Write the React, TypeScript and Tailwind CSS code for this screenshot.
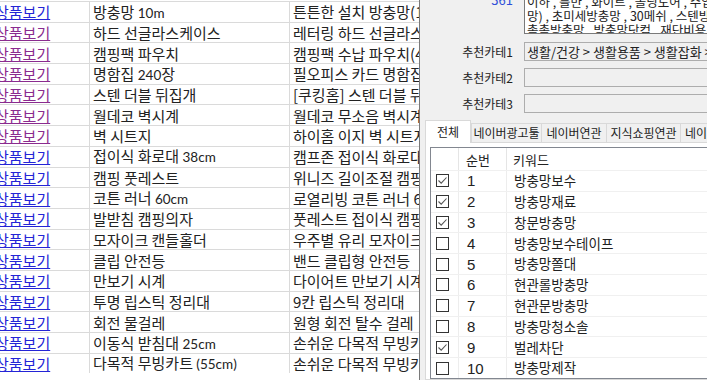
import React from 'react';

// product rows: [short name, full title]
const ROWS: [string, string][] = [
  ['방충망 10m', '튼튼한 설치 방충망(10m)'],
  ['하드 선글라스케이스', '레터링 하드 선글라스케이스'],
  ['캠핑팩 파우치', '캠핑팩 수납 파우치(4종)'],
  ['명함집 240장', '필오피스 카드 명함집 240장'],
  ['스텐 더블 뒤집개', '[쿠킹홈] 스텐 더블 뒤집개'],
  ['월데코 벽시계', '월데코 무소음 벽시계'],
  ['벽 시트지', '하이홈 이지 벽 시트지'],
  ['접이식 화로대 38cm', '캠프존 접이식 화로대'],
  ['캠핑 풋레스트', '위니즈 길이조절 캠핑 풋레스트'],
  ['코튼 러너 60cm', '로열리빙 코튼 러너 60cm'],
  ['발받침 캠핑의자', '풋레스트 접이식 캠핑의자'],
  ['모자이크 캔들홀더', '우주별 유리 모자이크 캔들홀더'],
  ['클립 안전등', '밴드 클립형 안전등'],
  ['만보기 시계', '다이어트 만보기 시계'],
  ['투명 립스틱 정리대', '9칸 립스틱 정리대'],
  ['회전 물걸레', '원형 회전 탈수 걸레'],
  ['이동식 받침대 25cm', '손쉬운 다목적 무빙카트'],
  ['다목적 무빙카트 (55cm)', '손쉬운 다목적 무빙카트'],
];

const KEYWORDS: [string, boolean][] = [
  ['방충망보수', true],
  ['방충망재료', true],
  ['창문방충망', true],
  ['방충망보수테이프', false],
  ['방충망쫄대', false],
  ['현관롤방충망', false],
  ['현관문방충망', false],
  ['방충망청소솔', false],
  ['벌레차단', true],
  ['방충망제작', false],
];

const KR = { fontFamily: '"Noto Sans CJK KR", "Noto Sans", sans-serif' };

// latin bits in the short name column render in a smaller face, like the sheet
function MixedText({ text }: { text: string }) {
  const parts = text.split(/([0-9A-Za-z()]+)/);
  return (
    <span className="whitespace-pre">
      {parts.map((p, i) =>
        /^[0-9A-Za-z()]+$/.test(p) ? (
          <span key={i} className="text-[13.5px] font-['Lato',sans-serif]">{p}</span>
        ) : (
          <span key={i}>{p}</span>
        )
      )}
    </span>
  );
}

function CheckBox({ checked }: { checked: boolean }) {
  return (
    <svg width="13" height="13" viewBox="0 0 13 13" className="shrink-0">
      <rect x="0.5" y="0.5" width="12" height="12" fill="#fff" stroke="#333" />
      {checked && <path d="M2.5 6.5 L5.2 9.2 L10.5 3.5" fill="none" stroke="#555" strokeWidth="1.1" />}
    </svg>
  );
}

function CategoryRow({ label, value }: { label: string; value?: string }) {
  return (
    <div className="mt-[7px] flex items-center h-[19px] shrink-0">
      <div className="w-[93px] shrink-0 text-right text-[12px] text-[#222] leading-none whitespace-nowrap">{label}</div>
      <div className="ml-[11px] w-[260px] shrink-0 h-full border border-[#adadad] bg-[#f0f0f0] px-[2px] text-[13px] leading-[17px] text-[#222] whitespace-nowrap overflow-hidden">
        {value}
      </div>
    </div>
  );
}

export default function App() {
  return (
    <div className="flex w-[707px] h-[380px] overflow-hidden bg-white" style={KR}>
      {/* --- Left sheet --- */}
      <div className="w-[419px] h-[380px] overflow-hidden bg-white pt-[1px] shrink-0">
        {ROWS.map(([name, title], i) => (
          <div key={i} className="flex h-[20.7px] border-t border-[#dadada] text-[15px] text-[#222]">
            <div className="w-[90px] h-full border-r border-[#dadada] flex items-center overflow-hidden shrink-0">
              <span
                className={`-ml-[5px] underline leading-none whitespace-nowrap ${
                  i >= 1 && i <= 6 ? 'text-[#8a2b8f]' : 'text-[#2424d6]'
                }`}
              >
                상품보기
              </span>
            </div>
            <div className="w-[200px] h-full border-r border-[#dadada] flex items-center pl-[3px] overflow-hidden whitespace-nowrap shrink-0 leading-none">
              <MixedText text={name} />
            </div>
            <div className="flex-1 h-full flex items-center pl-[3px] overflow-hidden whitespace-nowrap leading-none">
              {title}
            </div>
          </div>
        ))}
      </div>

      {/* --- Right panel --- */}
      <div className="w-[288px] h-[380px] border-l border-[#7a7a7a] bg-[#f0f0f0] overflow-hidden flex flex-col shrink-0">
        <div className="flex h-[35px] shrink-0 overflow-hidden items-start">
          <div className="w-[93px] shrink-0 text-right text-[13px] text-[#2f4fd8] leading-[13px] -mt-[7px]">361</div>
          <div className="ml-[11px] -mt-[8px] h-[42px] w-[260px] shrink-0 border border-[#7a7a7a] bg-white px-[2px] pt-[2px] text-[12.5px] leading-[14px] text-[#222] whitespace-nowrap overflow-hidden">
            <div>이하 , 틀만 , 화이트 , 폴딩도어 , 수입방충망</div>
            <div>망) , 초미세방충망 , 30메쉬 , 스텐방충망</div>
            <div>촘촘방충망 , 방충망닷컴 , 재단비용</div>
          </div>
        </div>

        <CategoryRow label="추천카테1" value="생활/건강 > 생활용품 > 생활잡화 > 모기장/방충망" />
        <CategoryRow label="추천카테2" />
        <CategoryRow label="추천카테3" />

        {/* tabs */}
        <div className="mt-[7px] ml-[5px] flex items-end h-[22px] shrink-0 text-[12px] text-[#222] whitespace-nowrap">
          <div className="w-[46px] h-[23px] bg-white border border-b-0 border-[#d9d9d9] flex items-center justify-center shrink-0 relative z-10 -mb-px">
            전체
          </div>
          <div className="w-[71px] h-[19px] bg-[#f0f0f0] border border-b-0 border-[#d9d9d9] flex items-center justify-center shrink-0">
            네이버광고툴
          </div>
          <div className="w-[65px] h-[19px] bg-[#f0f0f0] border border-b-0 border-l-0 border-[#d9d9d9] flex items-center justify-center shrink-0">
            네이버연관
          </div>
          <div className="w-[74px] h-[19px] bg-[#f0f0f0] border border-b-0 border-l-0 border-[#d9d9d9] flex items-center justify-center shrink-0">
            지식쇼핑연관
          </div>
          <div className="w-[60px] h-[19px] bg-[#f0f0f0] border border-b-0 border-l-0 border-[#d9d9d9] flex items-center pl-[4px] shrink-0">
            네이버쇼핑
          </div>
        </div>

        {/* tab page */}
        <div className="ml-[5px] flex-1 w-[300px] shrink-0 bg-white border border-[#d9d9d9] pl-[4px] pt-[4px] flex flex-col">
          <div className="flex-1 border border-[#828790] bg-white">
            <div className="flex h-[22px] text-[13px] text-[#222] leading-none">
              <div className="w-[28px] h-full border-r border-[#e5e5e5]" />
              <div className="w-[48px] h-full border-r border-[#e5e5e5] flex items-center pl-[7px]">순번</div>
              <div className="flex-1 h-full flex items-center pl-[6px]">키워드</div>
            </div>
            {KEYWORDS.map(([kw, checked], i) => (
              <div key={i} className="flex h-[20.8px] border-t border-[#f0f0f0] text-[#222] leading-none">
                <div className="w-[28px] h-full border-r border-[#ededed] flex items-center pl-[5px]">
                  <CheckBox checked={checked} />
                </div>
                <div className="w-[48px] h-full border-r border-[#ededed] flex items-center pl-[8px] text-[15px] font-['Liberation_Sans',sans-serif]">
                  {i + 1}
                </div>
                <div className="flex-1 h-full flex items-center pl-[7px] text-[13.5px]">{kw}</div>
              </div>
            ))}
          </div>
        </div>
      </div>
    </div>
  );
}
